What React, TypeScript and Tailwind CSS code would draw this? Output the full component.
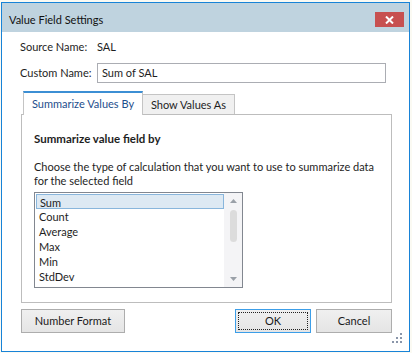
import React from "react";

const items = ["Sum", "Count", "Average", "Max", "Min", "StdDev"];

function Btn({ children, focus, className }: { children: React.ReactNode; focus?: boolean; className?: string }) {
  return (
    <button
      className={
        "h-[24px] bg-gradient-to-b from-[#f0f0f0] to-[#e5e5e5] text-[11px] leading-[14px] text-[#1a1a1a] flex items-center justify-center " +
        (focus ? "border border-[#3c9ee8] p-[2px] " : "border border-[#adadad] ") +
        (className ?? "")
      }
    >
      {focus ? (
        <span className="w-full h-full flex items-center justify-center border border-dotted border-[#222]">{children}</span>
      ) : (
        children
      )}
    </button>
  );
}

export default function App() {
  return (
    <div
      className="w-[412px] h-[353px] bg-[#fbfaf3] pt-[2px] pl-[1px] overflow-hidden whitespace-nowrap"
      style={{ fontFamily: 'Lato, "Liberation Sans", sans-serif' }}
    >
      <div className="w-[409px] h-[350px] border border-[#1883d7] bg-white flex flex-col">
        {/* title bar */}
        <div className="h-[29px] bg-[#bfd3df] flex items-center justify-between pl-[7px] pr-[5px] pt-[4px] shrink-0">
          <span className="text-[11px] leading-[14px] text-[#111]">Value Field Settings</span>
          <div className="w-[29px] h-[15px] bg-[#c75050] flex items-center justify-center">
            <svg width="9" height="8" viewBox="0 0 9 8">
              <path d="M1 0.5 L8 7.5 M8 0.5 L1 7.5" stroke="white" strokeWidth="2" />
            </svg>
          </div>
        </div>

        <div className="relative flex-1 flex flex-col text-[11px] leading-[14px] text-[#1e1e1e]">
          <div className="flex h-[16px] items-center mt-[7px] pl-[18px]">
            <span className="w-[77px]">Source Name:</span>
            <span>SAL</span>
          </div>

          <div className="flex items-center mt-[8px] pl-[18px]">
            <span className="w-[77px]">Custom Name:</span>
            <div className="w-[289px] h-[20px] border border-[#abadb3] flex items-center pl-[4px]">Sum of SAL</div>
          </div>

          {/* tabs */}
          <div className="ml-[19px] mt-[7px] w-[371px]">
            <div className="flex items-end pl-[2px] h-[24px]">
              <div className="w-[120px] h-[24px] border-t-2 border-t-[#3c8fd4] border-l border-r border-[#c4c4c4] bg-white flex items-center justify-center text-[#1e4e8c] relative z-10 -mb-px pb-[1px]">
                Summarize Values By
              </div>
              <div className="w-[92px] h-[20px] border-t border-r border-[#c4c4c4] bg-[#f0f0f0] flex items-center justify-center">
                Show Values As
              </div>
            </div>
            <div className="h-[189px] border border-[#bdbdbd] pl-[12px] pt-[16px]">
              <div className="font-bold text-[11.5px] leading-[16px]">Summarize value field by</div>
              <div className="mt-[13px] w-[345px] leading-[14px] whitespace-normal">
                Choose the type of calculation that you want to use to summarize data for the selected field
              </div>
              <div className="mt-[4px] w-[209px] h-[96px] border border-[#828790] flex">
                <div className="flex-1 flex flex-col pt-[1px] pl-[1px]">
                  {items.map((it, i) => (
                    <div
                      key={it}
                      className={
                        "h-[15px] leading-[15px] pl-[3px] " +
                        (i === 0 ? "bg-[#dde9f3] border border-[#89b6dc] pl-[2px] leading-[13px]" : "")
                      }
                    >
                      {it}
                    </div>
                  ))}
                </div>
                <div className="w-[18px] bg-[#f4f4f6] flex flex-col items-center pt-[6px] pb-[6px]">
                  <svg width="7" height="4" viewBox="0 0 7 4">
                    <path d="M0 4 L3.5 0 L7 4 Z" fill="#9aa0a8" />
                  </svg>
                  <div className="w-[7px] h-[32px] bg-[#dcdcdc] rounded-full mt-[7px]" />
                  <div className="flex-1" />
                  <svg width="7" height="4" viewBox="0 0 7 4">
                    <path d="M0 0 L3.5 4 L7 0 Z" fill="#9aa0a8" />
                  </svg>
                </div>
              </div>
            </div>
          </div>

          {/* buttons */}
          <div className="flex ml-[19px] mt-[6px] w-[371px]">
            <Btn className="w-[104px]">Number Format</Btn>
            <div className="flex-1" />
            <Btn focus className="w-[76px]">OK</Btn>
            <Btn className="w-[76px] ml-[5px]">Cancel</Btn>
          </div>

          <svg className="absolute right-[6px] bottom-[7px]" width="11" height="11" viewBox="0 0 11 11">
            <g fill="#8a96aa">
              <rect x="8" y="0" width="2" height="2" />
              <rect x="4" y="4" width="2" height="2" />
              <rect x="8" y="4" width="2" height="2" />
              <rect x="0" y="8" width="2" height="2" />
              <rect x="4" y="8" width="2" height="2" />
              <rect x="8" y="8" width="2" height="2" />
            </g>
          </svg>
        </div>
      </div>
    </div>
  );
}
